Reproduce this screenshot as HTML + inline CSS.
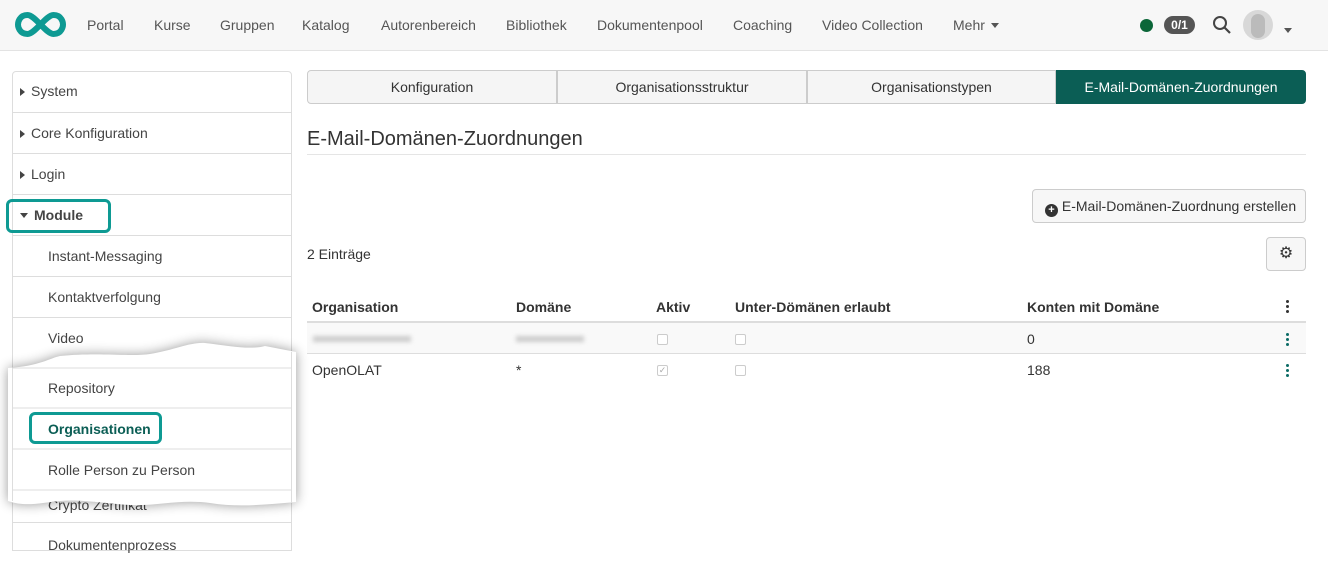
<!DOCTYPE html>
<html><head><meta charset="utf-8">
<style>
*{box-sizing:border-box;margin:0;padding:0}
body{width:1328px;height:540px;overflow:hidden;background:#fff;font-family:"Liberation Sans",sans-serif;color:#333;position:relative;font-size:14px}
.a{position:absolute;white-space:nowrap}
.nav{position:absolute;left:0;top:0;width:1328px;height:51px;background:#f7f7f7;border-bottom:1px solid #e3e3e3}
.nav span{position:absolute;top:17px;font-size:14px;color:#555}
.side{position:absolute;left:12px;top:71px;width:280px;height:480px;border:1px solid #ddd;border-radius:4px 4px 0 0}
.row{position:absolute;left:12px;width:280px;height:41px;border-top:1px solid #ddd;font-size:14px;color:#444}
.row span{position:absolute;top:12px}
.tr{display:inline-block;width:0;height:0;border-top:4px solid transparent;border-bottom:4px solid transparent;border-left:5px solid #444;margin-right:6px;vertical-align:0}
.td{display:inline-block;width:0;height:0;border-left:4px solid transparent;border-right:4px solid transparent;border-top:5px solid #444;margin-right:6px;vertical-align:2px}
.tab{position:absolute;top:70px;height:34px;background:#f5f5f5;border:1px solid #ccc;font-size:14px;text-align:center;line-height:32px;color:#333}
.th{position:absolute;top:299px;font-weight:bold;font-size:14px;color:#333}
.cb{position:absolute;width:11px;height:11px;border:1px solid #ccc;border-radius:2px;background:#fff}
.dots{position:absolute;width:4px}
.dots i{display:block;width:3px;height:3px;border-radius:50%;margin:0 0 2px 0}
</style></head><body>
<div class="nav">
<svg class="a" style="left:14px;top:11px" width="53" height="27" viewBox="0 0 53 27"><path d="M13.5,4 C5,4 4,12 4,13.5 C4,15 5,23 13.5,23 C21,23 32,4 39.5,4 C48,4 49,12 49,13.5 C49,15 48,23 39.5,23 C32,23 21,4 13.5,4 Z" fill="none" stroke="#0e9a93" stroke-width="6"/></svg>
<span style="left:87px">Portal</span><span style="left:154px">Kurse</span><span style="left:220px">Gruppen</span><span style="left:302px">Katalog</span><span style="left:381px">Autorenbereich</span><span style="left:506px">Bibliothek</span><span style="left:597px">Dokumentenpool</span><span style="left:733px">Coaching</span><span style="left:822px">Video Collection</span><span style="left:953px">Mehr <i class="td" style="border-top-color:#555;margin-left:2px"></i></span>
<div class="a" style="left:1140px;top:19px;width:13px;height:13px;border-radius:50%;background:#0b6638"></div>
<div class="a" style="left:1164px;top:16px;width:31px;height:18px;border-radius:9px;background:#555;color:#fff;font-size:12px;font-weight:bold;text-align:center;line-height:18px">0/1</div>
<svg class="a" style="left:1212px;top:15px" width="20" height="20"><circle cx="8" cy="8" r="6" fill="none" stroke="#444" stroke-width="2"/><line x1="12.5" y1="12.5" x2="18" y2="18" stroke="#444" stroke-width="2.2"/></svg>
<div class="a" style="left:1243px;top:10px;width:30px;height:30px;border-radius:50%;background:#d8d8d8"><div style="position:absolute;left:8px;top:4px;width:14px;height:24px;border-radius:7px;background:#bbb"></div></div>
<span style="left:1284px;top:22px"><i class="td" style="border-top-color:#555"></i></span>
</div>

<div class="side"></div>
<div class="row" style="top:71px;border-top:none"><span style="left:8px"><i class="tr"></i>System</span></div>
<div class="row" style="top:112px"><span style="left:8px"><i class="tr"></i>Core Konfiguration</span></div>
<div class="row" style="top:153px"><span style="left:8px"><i class="tr"></i>Login</span></div>
<div class="row" style="top:194px"><span style="left:8px;font-weight:bold"><i class="td"></i>Module</span></div>
<div class="a" style="left:6px;top:199px;width:105px;height:34px;border:3px solid #0e9a93;border-radius:6px"></div>
<div class="row" style="top:235px"><span style="left:36px">Instant-Messaging</span></div>
<div class="row" style="top:276px"><span style="left:36px">Kontaktverfolgung</span></div>
<div class="row" style="top:317px"><span style="left:36px">Video</span></div>
<div class="row" style="top:484px"><span style="left:36px">Crypto Zertifikat</span></div>
<div class="row" style="top:522px"><span style="left:36px;top:14px">Dokumentenprozess</span></div>

<svg class="a" style="left:0;top:330px" width="310" height="200" viewBox="0 330 310 200">
<defs><filter id="sh" x="-10%" y="-20%" width="120%" height="140%"><feGaussianBlur stdDeviation="6"/></filter></defs>
<path d="M8,368 C40,366 50,358 60,356 C100,352 130,357 150,354 C175,350 190,342 205,343 C230,346 250,350 265,346 L296,352 L296,502 C270,504 240,508 210,503 C180,499 160,506 130,505 C100,503 80,499 60,501 C40,503 25,507 8,501 Z" fill="#000" opacity="0.4" filter="url(#sh)"/>
<path d="M8,368 C40,366 50,358 60,356 C100,352 130,357 150,354 C175,350 190,342 205,343 C230,346 250,350 265,346 L296,352 L296,502 C270,504 240,508 210,503 C180,499 160,506 130,505 C100,503 80,499 60,501 C40,503 25,507 8,501 Z" fill="#fff"/>
<line x1="12" y1="368" x2="291" y2="368" stroke="#ddd"/><line x1="12" y1="408" x2="291" y2="408" stroke="#ddd"/><line x1="12" y1="449" x2="291" y2="449" stroke="#ddd"/><line x1="12" y1="490" x2="291" y2="490" stroke="#ddd"/>
<line x1="12.5" y1="368" x2="12.5" y2="501" stroke="#ddd"/><line x1="291.5" y1="352" x2="291.5" y2="503" stroke="#ddd"/>
</svg>
<span class="a" style="left:48px;top:380px;color:#444">Repository</span>
<div class="a" style="left:29px;top:412px;width:133px;height:32px;border:3px solid #0e9a93;border-radius:6px"></div>
<span class="a" style="left:48px;top:421px;font-weight:bold;color:#0b5e55">Organisationen</span>
<span class="a" style="left:48px;top:462px;color:#444">Rolle Person zu Person</span>

<div class="tab" style="left:307px;width:250px;border-radius:4px 0 0 4px">Konfiguration</div>
<div class="tab" style="left:557px;width:250px">Organisationsstruktur</div>
<div class="tab" style="left:807px;width:249px">Organisationstypen</div>
<div class="tab" style="left:1056px;width:250px;background:#0b5e55;border-color:#0b5e55;color:#fff;border-radius:0 4px 4px 0">E-Mail-Domänen-Zuordnungen</div>

<div class="a" style="left:307px;top:128px;font-size:20px;color:#333">E-Mail-Domänen-Zuordnungen</div>
<div class="a" style="left:307px;top:154px;width:999px;height:1px;background:#e5e5e5"></div>

<div class="a" style="left:1032px;top:189px;width:274px;height:34px;border:1px solid #ccc;border-radius:4px;background:#f7f7f7;font-size:14px;line-height:32px;padding-left:12px">
<span style="display:inline-block;width:13px;height:13px;border-radius:50%;background:#333;color:#fff;font-size:11px;line-height:13px;text-align:center;font-weight:bold;vertical-align:-2px">+</span> E-Mail-Domänen-Zuordnung erstellen</div>
<span class="a" style="left:307px;top:246px">2 Einträge</span>
<div class="a" style="left:1266px;top:237px;width:40px;height:34px;border:1px solid #ccc;border-radius:4px;background:#f7f7f7;text-align:center;line-height:32px;font-size:16px;color:#333">⚙</div>

<span class="th" style="left:312px">Organisation</span><span class="th" style="left:516px">Domäne</span><span class="th" style="left:656px">Aktiv</span><span class="th" style="left:735px">Unter-Dömänen erlaubt</span><span class="th" style="left:1027px">Konten mit Domäne</span>
<div class="dots" style="left:1286px;top:300px"><i style="background:#333"></i><i style="background:#333"></i><i style="background:#333"></i></div>
<div class="a" style="left:307px;top:321px;width:999px;height:2px;background:#ddd"></div>
<div class="a" style="left:307px;top:323px;width:999px;height:31px;background:#f9f9f9;border-bottom:1px solid #ddd"></div>
<div class="a" style="left:313px;top:336px;width:98px;height:6px;background:#ccc;filter:blur(2px)"></div>
<div class="a" style="left:516px;top:336px;width:68px;height:6px;background:#ccc;filter:blur(2px)"></div>
<div class="cb" style="left:657px;top:334px"></div><div class="cb" style="left:735px;top:334px"></div>
<span class="a" style="left:1027px;top:331px">0</span>
<div class="dots" style="left:1286px;top:333px"><i style="background:#0b6b66"></i><i style="background:#0b6b66"></i><i style="background:#0b6b66"></i></div>
<span class="a" style="left:312px;top:362px">OpenOLAT</span><span class="a" style="left:516px;top:362px">*</span>
<div class="cb" style="left:657px;top:365px;font-size:9px;line-height:9px;color:#aaa;text-align:center">✓</div><div class="cb" style="left:735px;top:365px"></div>
<span class="a" style="left:1027px;top:362px">188</span>
<div class="dots" style="left:1286px;top:364px"><i style="background:#0b6b66"></i><i style="background:#0b6b66"></i><i style="background:#0b6b66"></i></div>
</body></html>
